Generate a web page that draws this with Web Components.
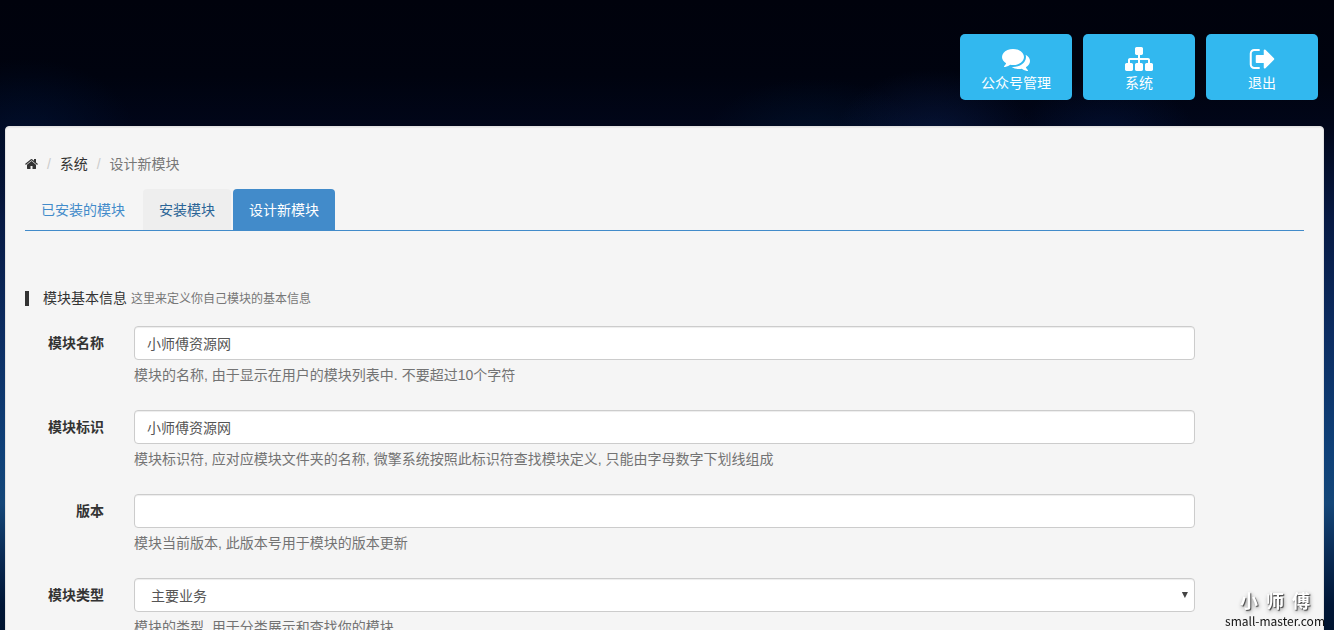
<!DOCTYPE html>
<html lang="zh-CN">
<head>
<meta charset="utf-8">
<title>设计新模块</title>
<style>
  html { scrollbar-width: none; }
  body {
    margin: 0;
    min-height: 100vh;
    font: 14px/20px "Liberation Sans", "Noto Sans CJK SC", sans-serif;
    color: #333;
    background:
      radial-gradient(ellipse 100px 70px at 70% 22%, rgba(12, 36, 88, .45), transparent),
      radial-gradient(ellipse 110px 60px at 61% 22%, rgba(0, 28, 60, .4), transparent),
      radial-gradient(ellipse 90px 60px at 83% 22%, rgba(4, 28, 80, .4), transparent),
      radial-gradient(ellipse 110px 80px at 2% 22%, rgba(0, 22, 60, .5), transparent),
      linear-gradient(#00020c 0%, #00030f 12%, #010619 20%, #071a44 35%, #0c2d62 53%, #0f4179 72%, #144678 80%, #0a2b55 88%, #001636 96%, #001430 100%);
    background-attachment: fixed;
  }
</style>
</head>
<body>

<template id="t-top-nav">
  <style>
    :host { display: block; }
    nav { display: flex; justify-content: flex-end; gap: 11px; padding: 34px 16px 26px; }
  </style>
  <nav><slot></slot></nav>
</template>

<template id="t-nav-tile">
  <style>
    :host { display: block; }
    a {
      display: flex; flex-direction: column; align-items: center;
      box-sizing: border-box; width: 112px; height: 66px; padding-top: 11px;
      border-radius: 5px; background: #32b8ef; color: #fff; text-decoration: none;
    }
    svg { display: block; width: 28px; height: 28px; fill: currentColor; }
  </style>
  <a href="#"><svg viewBox="0 0 1792 1792" aria-hidden="true"><path/></svg><span><slot></slot></span></a>
</template>

<template id="t-main-panel">
  <style>
    :host {
      display: block; margin: 0 10px 20px 5px; padding: 19px;
      background: #f5f5f5; border: 1px solid #e3e3e3; border-radius: 4px;
      box-shadow: inset 0 1px 1px rgba(0, 0, 0, .05);
    }
  </style>
  <slot></slot>
</template>

<template id="t-bread-crumb">
  <style>
    :host { display: block; padding: 8px 0; margin-bottom: 7px; }
    ol { display: flex; gap: 4px; margin: 0; padding: 0; list-style: none; }
    li { display: flex; }
    li + li::before { content: "/\00a0"; padding: 0 5px; color: #ccc; }
    a { color: #333; text-decoration: none; }
    a svg { display: block; width: 13px; height: 14px; margin-top: 3px; fill: currentColor; }
    .now { color: #777; }
  </style>
  <ol>
    <li><a href="#" aria-label="首页"><svg viewBox="64 0 1664 1792"><path d="M1472 992v480q0 26-19 45t-45 19h-384v-384h-256v384h-384q-26 0-45-19t-19-45v-480q0-1 .5-3t.5-3l575-474 575 474q1 2 1 6zm223-69l-62 74q-8 9-21 11h-3q-13 0-21-7l-692-577-692 577q-12 8-24 7-13-2-21-11l-62-74q-8-10-7-23.5t11-21.5l719-599q32-26 76-26t76 26l244 204v-195q0-14 9-23t23-9h192q14 0 23 9t9 23v408l219 182q10 8 11 21.5t-7 23.5z"/></svg></a></li>
    <li><a href="#"><slot name="parent"></slot></a></li>
    <li class="now"><slot></slot></li>
  </ol>
</template>

<template id="t-tab-bar">
  <style>
    :host { display: flex; gap: 2px; border-bottom: 1px solid #428bca; margin-bottom: 57px; }
  </style>
  <slot></slot>
</template>

<template id="t-tab-item">
  <style>
    :host { display: block; }
    a {
      display: block; padding: 11px 16px 10px; border-radius: 4px 4px 0 0;
      color: #428bca; text-decoration: none;
    }
    :host([hot]) a { background: #eee; color: #2a6496; }
    :host([active]) a { background: #428bca; color: #fff; }
  </style>
  <a href="#"><slot></slot></a>
</template>

<template id="t-section-title">
  <style>
    :host { display: block; margin-bottom: 17px; }
    h2 { display: flex; align-items: baseline; gap: 4px; margin: 0; font: inherit; }
    h2::before { content: ""; align-self: center; width: 4px; height: 15px; margin-right: 10px; background: #333; }
    small { font-size: 12px; color: #777; }
  </style>
  <h2><slot></slot><small><slot name="note"></slot></small></h2>
</template>

<template id="t-form-row">
  <style>
    :host {
      display: grid; grid-template-columns: 1fr 10fr 1fr; margin: 0 -15px 15px;
    }
    label { padding: 7px 15px 0 0; text-align: right; font-weight: bold; white-space: nowrap; }
    .body { padding: 0 15px; }
    .control { display: block; position: relative; }
    input, select {
      display: block; box-sizing: border-box; width: 100%; height: 34px; margin: 0; padding: 6px 12px;
      font: inherit; color: #555; background: #fff; border: 1px solid #ccc; border-radius: 4px;
      box-shadow: inset 0 1px 1px rgba(0, 0, 0, .075); appearance: none; outline: 0;
    }
    select { padding: 7px 16px 5px; }
    .arrow {
      position: absolute; right: 7px; top: 14px; width: 6px; height: 6px;
      background: #444; clip-path: polygon(0 0, 100% 0, 50% 100%); pointer-events: none;
    }
    p { margin: 5px 0 10px; color: #737373; }
  </style>
  <label for="field"></label>
  <div class="body">
    <div class="control"></div>
    <p><slot></slot></p>
  </div>
</template>

<template id="t-site-mark">
  <style>
    :host {
      display: block; position: fixed; right: 9px; bottom: 0; text-align: center; pointer-events: none; color: #111;
    }
    b {
      display: flex; justify-content: center; gap: 8px; line-height: 20px; font-size: 18px;
      font-weight: bold; color: #fff; text-shadow: 1px 1px 1px #444, 1px 2px 4px #888;
    }
    i { font-style: normal; }
    span { display: block; line-height: 18px; font-family: "Noto Sans CJK SC", sans-serif; font-size: 12px; }
  </style>
  <b><i>小</i><i>师</i><i>傅</i></b>
  <span><slot></slot></span>
</template>

<top-nav>
  <nav-tile icon="comments">公众号管理</nav-tile>
  <nav-tile icon="sitemap">系统</nav-tile>
  <nav-tile icon="signout">退出</nav-tile>
</top-nav>

<main-panel>
  <bread-crumb><span slot="parent">系统</span>设计新模块</bread-crumb>
  <tab-bar>
    <tab-item>已安装的模块</tab-item>
    <tab-item hot>安装模块</tab-item>
    <tab-item active>设计新模块</tab-item>
  </tab-bar>
  <section-title>模块基本信息<span slot="note">这里来定义你自己模块的基本信息</span></section-title>
  <form-row label="模块名称" value="小师傅资源网">模块的名称, 由于显示在用户的模块列表中. 不要超过10个字符</form-row>
  <form-row label="模块标识" value="小师傅资源网">模块标识符, 应对应模块文件夹的名称, 微擎系统按照此标识符查找模块定义, 只能由字母数字下划线组成</form-row>
  <form-row label="版本">模块当前版本, 此版本号用于模块的版本更新</form-row>
  <form-row label="模块类型" options="主要业务">模块的类型, 用于分类展示和查找你的模块</form-row>
</main-panel>

<site-mark>small-master.com</site-mark>

<script>
  const icons = {
    comments: ["0 0 1792 1792", "M1408 768q0 139-94 257t-256.5 186.5-353.5 68.5q-86 0-176-16-124 88-278 128-36 9-86 16h-3q-11 0-20.5-8t-11.5-21q-1-3-1-6.5t.5-6.5 2-6l2.5-5 3.5-5.5 4-5 4.5-5 4-4.5q5-6 23-25t26-29.5 22.5-29 25-38.5 20.5-44q-124-72-195-177t-71-224q0-139 94-257t256.5-186.5 353.5-68.5 353.5 68.5 256.5 186.5 94 257zm384 256q0 120-71 224.5t-195 176.5q10 24 20.5 44t25 38.5 22.5 29 26 29.5 23 25q1 1 4 4.5t4.5 5 4 5 3.5 5.5l2.5 5 2 6 .5 6.5-1 6.5q-3 14-13 22t-22 7q-50-7-86-16-154-40-278-128-90 16-176 16-271 0-472-132 58 4 88 4 161 0 309-45t264-129q125-92 192-212t67-254q0-77-23-152 129 71 204 178t75 230z"],
    sitemap: ["0 0 1792 1792", "M1792 1248v320q0 40-28 68t-68 28h-320q-40 0-68-28t-28-68v-320q0-40 28-68t68-28h96v-192h-512v192h96q40 0 68 28t28 68v320q0 40-28 68t-68 28h-320q-40 0-68-28t-28-68v-320q0-40 28-68t68-28h96v-192h-512v192h96q40 0 68 28t28 68v320q0 40-28 68t-68 28h-320q-40 0-68-28t-28-68v-320q0-40 28-68t68-28h96v-192q0-52 38-90t90-38h512v-192h-96q-40 0-68-28t-28-68v-320q0-40 28-68t68-28h320q40 0 68 28t28 68v320q0 40-28 68t-68 28h-96v192h512q52 0 90 38t38 90v192h96q40 0 68 28t28 68z"],
    signout: ["-48 0 1792 1792", "M704 1440q0 4 1 20t.5 26.5-3 23.5-10 19.5-20.5 6.5h-320q-119 0-203.5-84.5t-84.5-203.5v-704q0-119 84.5-203.5t203.5-84.5h320q13 0 22.5 9.5t9.5 22.5q0 4 1 20t.5 26.5-3 23.5-10 19.5-20.5 6.5h-320q-66 0-113 47t-47 113v704q0 66 47 113t113 47h312l11.5 1 11.5 3 8 5.5 7 9 2 13.5zm928-544q0 26-19 45l-544 544q-19 19-45 19t-45-19-19-45v-288h-448q-26 0-45-19t-19-45v-384q0-26 19-45t45-19h448v-288q0-26 19-45t45-19 45 19l544 544q19 19 19 45z"]
  };

  class BaseElement extends HTMLElement {
    constructor() {
      super();
      const template = document.getElementById("t-" + this.localName);
      this.attachShadow({ mode: "open" }).append(template.content.cloneNode(true));
    }
  }

  class NavTile extends BaseElement {
    connectedCallback() {
      const [box, path] = icons[this.getAttribute("icon")];
      this.shadowRoot.querySelector("svg").setAttribute("viewBox", box);
      this.shadowRoot.querySelector("path").setAttribute("d", path);
    }
  }

  class FormRow extends BaseElement {
    connectedCallback() {
      this.shadowRoot.querySelector("label").textContent = this.getAttribute("label");
      const control = this.shadowRoot.querySelector(".control");
      const options = this.getAttribute("options");
      const field = document.createElement(options ? "select" : "input");
      field.id = "field";
      control.replaceChildren(field);
      if (options) {
        for (const text of options.split("|")) field.add(new Option(text));
        const arrow = document.createElement("span");
        arrow.className = "arrow";
        control.append(arrow);
      } else {
        field.type = "text";
        field.value = this.getAttribute("value") || "";
      }
    }
  }

  customElements.define("nav-tile", NavTile);
  customElements.define("form-row", FormRow);
  for (const name of ["top-nav", "main-panel", "bread-crumb", "tab-bar", "tab-item", "section-title", "site-mark"]) {
    customElements.define(name, class extends BaseElement {});
  }
</script>
</body>
</html>
